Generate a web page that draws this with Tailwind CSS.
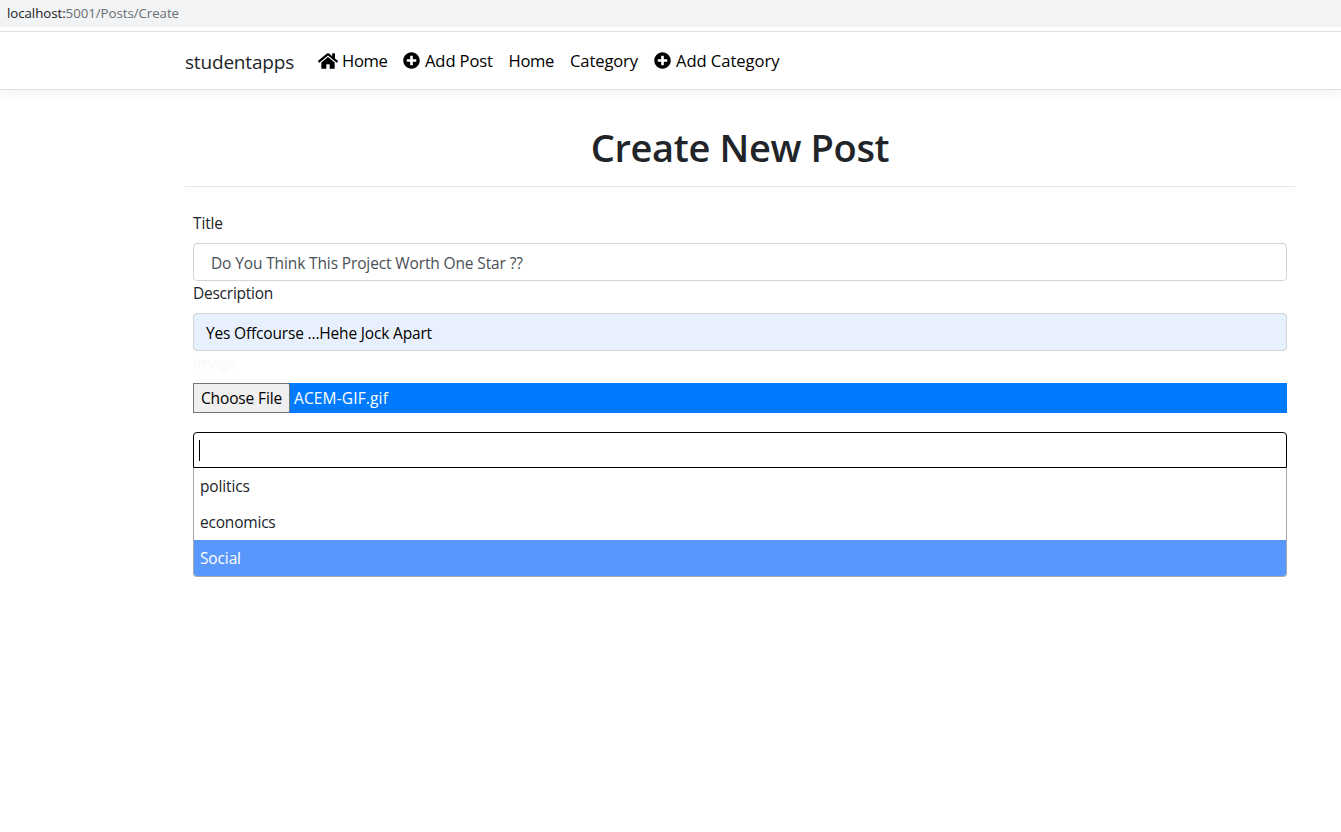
<!DOCTYPE html>
<html lang="en">
<head>
<meta charset="utf-8">
<title>Create New Post</title>
<script src="https://cdn.jsdelivr.net/npm/@tailwindcss/browser@4"></script>
</head>
<body class="h-[832px] overflow-hidden bg-white font-['Open_Sans','Noto_Sans',sans-serif] text-[15.5px] leading-6 tracking-[-0.13px] text-[#212529]">
<div class="flex h-[27px] items-center bg-[#f1f3f4] pb-0.5 pl-[7px] text-[13.3px] tracking-[-0.06px] text-[#6b6f73]"><p><span class="text-[#202124]">localhost:</span><span>5001/Posts/Create</span></p></div>
<header class="mt-1 h-[59px] border-y border-[#dee2e6] shadow-[0_4px_12px_rgba(0,0,0,0.05)]">
  <nav class="flex h-full items-center pl-[185px] text-[16.6px] text-black">
    <a class="mt-0.5 w-[133px] text-[19px] tracking-[-0.18px] text-[#212529]">studentapps</a>
    <a class="flex w-[85px] items-center"><svg class="mr-1 h-[18px] w-5" viewBox="0 0 576 512" fill="currentColor"><path d="M280.37 148.26L96 300.11V464a16 16 0 0 0 16 16l112.06-.29a16 16 0 0 0 15.92-16V368a16 16 0 0 1 16-16h64a16 16 0 0 1 16 16v95.64a16 16 0 0 0 16 16.05L464 480a16 16 0 0 0 16-16V300L295.67 148.26a12.19 12.19 0 0 0-15.3 0zM571.6 251.47L488 182.56V44.05a12 12 0 0 0-12-12h-56a12 12 0 0 0-12 12v72.61L318.47 43a48 48 0 0 0-61 0L4.34 251.47a12 12 0 0 0-1.6 16.9l25.5 31A12 12 0 0 0 45.15 301l235.22-193.74a12.19 12.19 0 0 1 15.3 0L530.9 301a12 12 0 0 0 16.9-1.6l25.5-31a12 12 0 0 0-1.7-16.93z"/></svg><span class="tracking-[-0.35px]">Home</span></a>
    <a class="flex w-[105px] items-center"><svg class="mr-[5px] h-[17px] w-[17px]" viewBox="0 0 512 512" fill="currentColor"><path d="M256 8C119 8 8 119 8 256s111 248 248 248 248-111 248-248S393 8 256 8zm144 276c0 6.600-5.400 12-12 12h-92v92c0 6.600-5.400 12-12 12h-56c-6.600 0-12-5.400-12-12v-92h-92c-6.600 0-12-5.400-12-12v-56c0-6.600 5.400-12 12-12h92v-92c0-6.600 5.400-12 12-12h56c6.600 0 12 5.400 12 12v92h92c6.600 0 12 5.400 12 12v56z"/></svg>Add Post</a>
    <a class="w-[62px] pl-[0.5px] tracking-[-0.35px]">Home</a>
    <a class="w-[84px]">Category</a>
    <a class="flex items-center tracking-[-0.06px]"><svg class="mr-[5px] h-[17px] w-[17px]" viewBox="0 0 512 512" fill="currentColor"><path d="M256 8C119 8 8 119 8 256s111 248 248 248 248-111 248-248S393 8 256 8zm144 276c0 6.600-5.400 12-12 12h-92v92c0 6.600-5.400 12-12 12h-56c-6.600 0-12-5.400-12-12v-92h-92c-6.600 0-12-5.400-12-12v-56c0-6.600 5.400-12 12-12h92v-92c0-6.600 5.400-12 12-12h56c6.600 0 12 5.400 12 12v92h92c6.600 0 12 5.400 12 12v56z"/></svg>Add Category</a>
  </nav>
</header>
<main class="ml-[185px] w-[1110px] pt-[33px]">
  <h1 class="text-center text-[38px] font-semibold leading-[48px] tracking-[-0.35px]">Create New Post</h1>
  <hr class="mt-[15px] border-[#e5e5e5]">
  <form class="px-2 pt-6">
    <label class="mb-2 block">Title</label>
    <div class="flex h-[38px] items-center rounded-[4px] border border-[#ced4da] px-[17px] pt-0.5 text-[#495057]">Do You Think This Project Worth One Star ??</div>
    <label class="mb-2 block tracking-[-0.24px]">Description</label>
    <div class="flex h-[38px] items-center rounded-[4px] border border-[#ced4da] bg-[#e8f0fe] px-3 pt-0.5 tracking-[-0.17px] text-black">Yes Offcourse ...Hehe Jock Apart</div>
    <label class="mb-2 block text-[#f8f9fa]">Image</label>
    <div class="flex h-[30px] bg-[#007bff] text-white">
      <span class="flex w-[97px] items-center justify-center rounded-r-[2px] border border-[#767676] bg-[#efefef] text-black">Choose File</span>
      <span class="flex items-center pl-1 tracking-[0.14px]">ACEM-GIF.gif</span>
    </div>
    <div class="mt-[19px] flex h-9 items-center rounded-t-[4px] border border-black pl-[5px]"><span class="h-[21px] w-px bg-black"></span></div>
    <ul class="overflow-hidden rounded-b-[4px] border border-t-0 border-[#aaa]">
      <li class="flex h-9 items-center px-1.5">politics</li>
      <li class="flex h-9 items-center px-1.5 tracking-[-0.2px]">economics</li>
      <li class="flex h-9 items-center bg-[#5897fb] px-1.5 text-white">Social</li>
    </ul>
  </form>
</main>
</body>
</html>
